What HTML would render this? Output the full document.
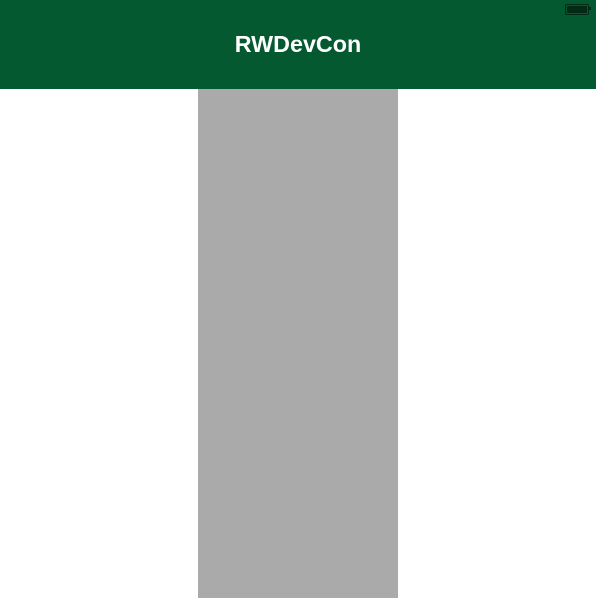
<!DOCTYPE html>
<html><head><meta charset="utf-8"><style>
html,body{margin:0;padding:0;width:596px;height:598px;overflow:hidden;background:#fff;font-family:"Liberation Sans",sans-serif}
.nav{position:absolute;left:0;top:0;width:596px;height:89px;background:#055930}
.title{position:absolute;left:0;width:596px;top:31px;text-align:center;color:#fff;font-size:23.3px;font-weight:bold;line-height:26px}
.bat{position:absolute;left:565px;top:4px;width:20px;height:7px;border:1px solid #022a15;border-radius:2px;padding:1px}
.bat i{display:block;width:100%;height:100%;background:#022a15;border-radius:1px}
.bat b{position:absolute;right:-3px;top:2px;width:2px;height:3px;background:#022a15}
.col{position:absolute;left:198px;top:89px;width:200px;height:509px;background:#aaaaaa}
</style></head><body>
<div class="nav"><div class="title">RWDevCon</div><div class="bat"><i></i><b></b></div></div>
<div class="col"></div>
</body></html>
